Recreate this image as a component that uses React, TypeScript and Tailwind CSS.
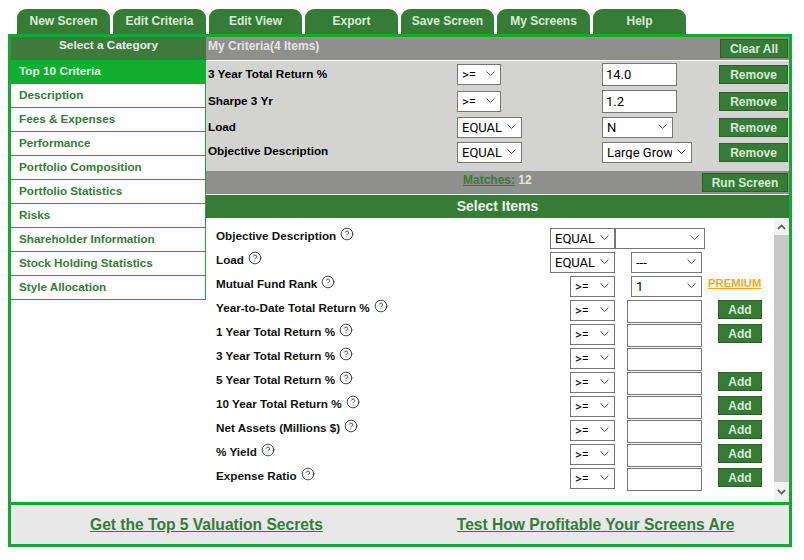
import React from "react";
import { CircleHelp } from "lucide-react";

const sans = { fontFamily: '"Liberation Sans", Arial, sans-serif' };
const tabs = ["New Screen", "Edit Criteria", "Edit View", "Export", "Save Screen", "My Screens", "Help"];
const cats = ["Description", "Fees & Expenses", "Performance", "Portfolio Composition", "Portfolio Statistics", "Risks", "Shareholder Information", "Stock Holding Statistics", "Style Allocation"];

function Sel({ value, w, className = "" }: { value: string; w: string; className?: string }) {
  return (
    <span className={`relative block h-[21px] ${w} ${className}`}>
      <select
        defaultValue={value}
        className="appearance-none block w-full h-full bg-white border border-[#767676] text-[13px] text-black pl-[4px] pr-[19px] font-['Roboto',sans-serif] leading-none"
      >
        <option value={value}>{value}</option>
      </select>
      <svg className="absolute right-[6px] top-[7px] pointer-events-none" width="9" height="6" viewBox="0 0 9 6">
        <path d="M0.5 0.5 L4.5 4.5 L8.5 0.5" fill="none" stroke="#555" strokeWidth="1" />
      </svg>
    </span>
  );
}

function Input({ value = "", className = "" }: { value?: string; className?: string }) {
  return (
    <input
      readOnly
      value={value}
      className={`block h-[23px] w-[75px] bg-white border border-[#767676] px-[3px] text-[13px] text-black font-['Roboto',sans-serif] ${className}`}
    />
  );
}

function Btn({ label, w, className = "" }: { label: string; w: string; className?: string }) {
  return (
    <button className={`${w} h-[19px] flex items-center justify-center bg-[#367c36] border border-[#2d5f2d] text-[#d6ecd6] text-[12px] font-bold leading-none ${className}`}>
      {label}
    </button>
  );
}

const rows = [
  { l: "3 Year Total Return %", h: "h-[27px]", s: "w-[44px]", op: ">=", input: "14.0", top: "pb-[2px]" },
  { l: "Sharpe 3 Yr", h: "h-[27px]", s: "w-[44px]", op: ">=", input: "1.2", top: "pb-[2px]" },
  { l: "Load", h: "h-[25px]", s: "w-[65px]", op: "EQUAL", sel: "N", sw: "w-[71px]", top: "pb-[2px]" },
  { l: "Objective Description", h: "h-[25px]", s: "w-[65px]", op: "EQUAL", sel: "Large Growth", sw: "w-[90px]", top: "pb-[4px]" },
];

const items = [
  { l: "Objective Description", op: "EQUAL", kind: "empty" },
  { l: "Load", op: "EQUAL", kind: "dash" },
  { l: "Mutual Fund Rank", op: ">=", kind: "rank" },
  { l: "Year-to-Date Total Return %", op: ">=", kind: "add" },
  { l: "1 Year Total Return %", op: ">=", kind: "add" },
  { l: "3 Year Total Return %", op: ">=", kind: "none" },
  { l: "5 Year Total Return %", op: ">=", kind: "add" },
  { l: "10 Year Total Return %", op: ">=", kind: "add" },
  { l: "Net Assets (Millions $)", op: ">=", kind: "add" },
  { l: "% Yield", op: ">=", kind: "add" },
  { l: "Expense Ratio", op: ">=", kind: "add" },
];

export default function App() {
  return (
    <div className="w-[804px] h-[560px] bg-white pt-[9px] pl-[8px]" style={sans}>
      <div className="flex h-[25px] pl-[9px] gap-[3px]">
        {tabs.map((t) => (
          <div key={t} className="w-[93px] h-[25px] rounded-t-[9px] bg-[#367c36] text-[#d6ecd6] text-[12px] font-bold flex items-center justify-center pb-[2px]">
            {t}
          </div>
        ))}
      </div>
      <div className="w-[784px] h-[513px] border-[3px] border-[#14a832] flex flex-col">
        <div className="flex h-[465px]">
          <div className="w-[195px] shrink-0">
            <div className="h-[23px] bg-[#3f7a3d] text-[#e2efe2] text-[11.8px] font-bold flex items-center justify-center pb-[5px]">Select a Category</div>
            <div className="h-[24px] bg-[#10ad2f] text-[#e6f5e6] text-[11.8px] font-bold flex items-center pl-[8px]">Top 10 Criteria</div>
            {cats.map((c) => (
              <div key={c} className="h-[24px] bg-white border-b border-b-[#22a33f] border-r border-r-[#22a33f] text-[#367c36] text-[11.7px] font-bold flex items-center pl-[8px] pb-[1px]">{c}</div>
            ))}
          </div>
          <div className="flex-1 flex flex-col min-w-0">
            <div className="h-[23px] bg-[#8f8f8c] flex items-center justify-between pl-[2px] pr-[1px]">
              <span className="text-[#e4e4e2] text-[12px] font-bold pb-[5px]">My Criteria(4 Items)</span>
              <Btn label="Clear All" w="w-[68px]" />
            </div>
            <div className="h-[110px] mt-[1px] bg-[#d3d3d1]">
              {rows.map((r) => (
                <div key={r.l} className={`flex items-center ${r.h}`}>
                  <div className={`w-[251px] pl-[2px] text-[11.7px] font-bold text-black ${r.top}`}>{r.l}</div>
                  <div className="w-[145px] pb-[1px]"><Sel value={r.op} w={r.s} /></div>
                  <div className="w-[117px] pb-[1px]">
                    {r.input ? <Input value={r.input} /> : <Sel value={r.sel!} w={r.sw!} />}
                  </div>
                  <Btn label="Remove" w="w-[69px]" />
                </div>
              ))}
            </div>
            <div className="h-[23px] bg-[#8f8f8c] flex items-center pr-[1px]">
              <div className="w-[313px] pl-[257px] text-[12px] font-bold pb-[5px] whitespace-nowrap shrink-0">
                <span className="text-[#367c36] underline">Matches:</span><span className="text-[#e4e4e2]"> 12</span>
              </div>
              <div className="flex-1 flex justify-end"><Btn label="Run Screen" w="w-[86px]" /></div>
            </div>
            <div className="h-[23px] mt-[1px] bg-[#367c36] text-[#e8f4e8] text-[14px] font-bold flex items-center justify-center">Select Items</div>
            <div className="flex flex-1 min-h-0">
              <div className="flex-1 pt-[8px] pl-[10px]">
                {items.map((it) => (
                  <div key={it.l} className="flex items-center h-[24px]">
                    <div className="w-[334px] shrink-0 flex items-center gap-[4px] text-[11.7px] font-bold text-[#111] pb-[4px]">
                      <span>{it.l}</span>
                      <CircleHelp size={14} strokeWidth={1.4} className="text-[#222] mb-[3px]" />
                    </div>
                    <div className="w-[65px] shrink-0 flex justify-end"><Sel value={it.op} w={it.op === "EQUAL" ? "w-[65px]" : "w-[45px]"} /></div>
                    <div className="w-[103px] shrink-0">
                      {it.kind === "empty" && <Sel value="" w="w-[90px]" />}
                      {it.kind === "dash" && <Sel value="---" w="w-[71px]" className="ml-[16px]" />}
                      {it.kind === "rank" && <Sel value="1" w="w-[71px]" className="ml-[16px]" />}
                      {(it.kind === "add" || it.kind === "none") && <Input className="ml-[12px] mt-[2px]" />}
                    </div>
                    {it.kind === "add" && <Btn label="Add" w="w-[44px]" className="mb-[1px]" />}
                    {it.kind === "rank" && <a className="-ml-[10px] text-[11.3px] font-bold text-[#f5a623] underline pb-[6px]">PREMIUM</a>}
                  </div>
                ))}
              </div>
              <div className="w-[15px] shrink-0 flex flex-col items-center bg-[#f1f1f1]">
                <div className="h-[17px] flex items-center justify-center">
                  <svg width="9" height="6" viewBox="0 0 9 6"><path d="M1 5 L4.5 1.5 L8 5" fill="none" stroke="#505050" strokeWidth="1.6" /></svg>
                </div>
                <div className="w-full flex-1 bg-[#c8c8c8]" />
                <div className="h-[20px] flex items-center justify-center">
                  <svg width="9" height="6" viewBox="0 0 9 6"><path d="M1 1 L4.5 4.5 L8 1" fill="none" stroke="#505050" strokeWidth="1.6" /></svg>
                </div>
              </div>
            </div>
          </div>
        </div>
        <div className="flex-1 border-t-[3px] border-[#14a832] bg-[#e8e8e8] flex items-center text-[15.6px] font-bold text-[#367c36]">
          <a className="underline ml-[79px]">Get the Top 5 Valuation Secrets</a>
          <a className="underline ml-[134px]">Test How Profitable Your Screens Are</a>
        </div>
      </div>
    </div>
  );
}
